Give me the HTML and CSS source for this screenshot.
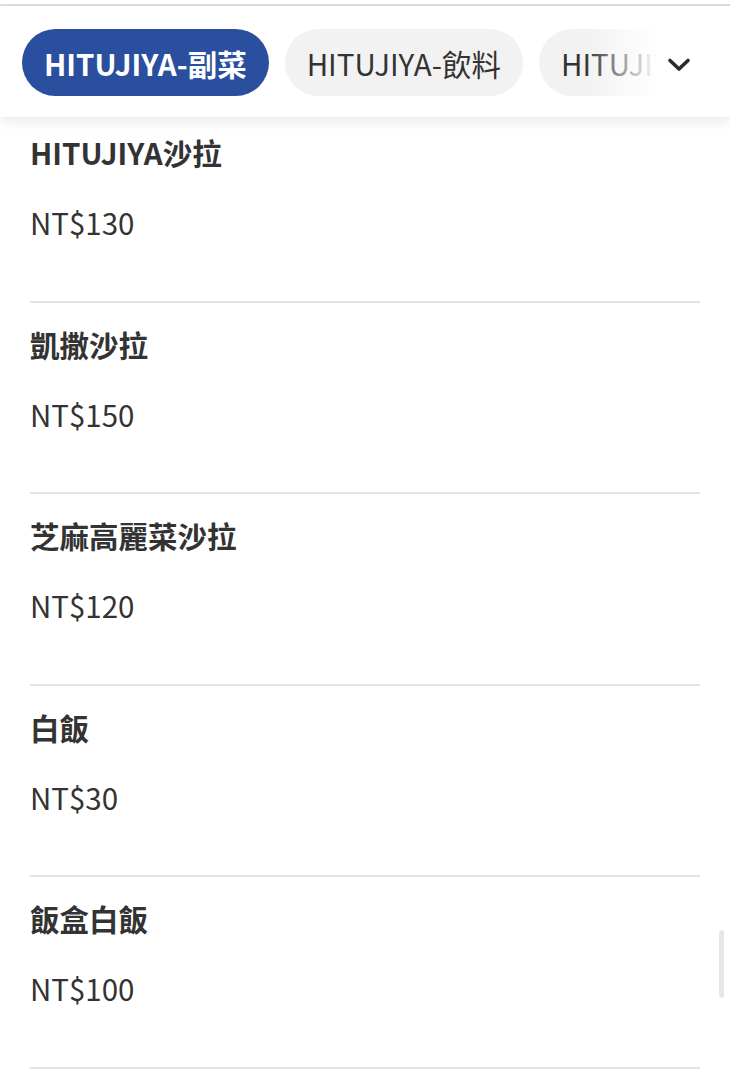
FILE: index.html
```html
<!DOCTYPE html>
<html lang="zh-Hant">
<head>
  <meta charset="UTF-8" />
  <meta name="viewport" content="width=device-width, initial-scale=1.0"/>
  <title>HITUJIYA 菜單</title>
  <link rel="stylesheet" href="styles.css">
</head>
<body>
<div class="top-line"></div>
<div class="tab-bar">
  <div class="tabs">
    <button class="tab active">HITUJIYA-副菜</button>
    <button class="tab">HITUJIYA-飲料</button>
    <button class="tab">HITUJIYA-甜點</button>
  </div>
  <div class="fade"></div>
  <button class="more">
    <svg width="24" height="16" viewBox="0 0 24 16">
      <path d="M3 3.5 L12 12 L21 3.5" fill="none" stroke="#2b2b2b" stroke-width="3.6" stroke-linecap="round" stroke-linejoin="round"/>
    </svg>
  </button>
</div>
<div class="menu">
  <div class="item">
    <div class="name">HITUJIYA沙拉</div>
    <div class="price">NT$130</div>
  </div>
  <div class="item">
    <div class="name">凱撒沙拉</div>
    <div class="price">NT$150</div>
  </div>
  <div class="item">
    <div class="name">芝麻高麗菜沙拉</div>
    <div class="price">NT$120</div>
  </div>
  <div class="item">
    <div class="name">白飯</div>
    <div class="price">NT$30</div>
  </div>
  <div class="item">
    <div class="name">飯盒白飯</div>
    <div class="price">NT$100</div>
  </div>
</div>
<div class="scrollbar"></div>
</body>
</html>
```

FILE: styles.css
```css
body {
  margin: 0;
  padding: 0;
  background-color: #fff;
  font-family: "Noto Sans CJK TC", "Noto Sans", sans-serif;
  color: #333;
  overflow: hidden;
  height: 1078px;
}
.top-line {
  height: 4px;
  border-bottom: 2px solid #dcdcdc;
  background-color: #fff;
}
.tab-bar {
  position: relative;
  z-index: 2;
  height: 111px;
  background-color: #fff;
  box-shadow: 0 6px 10px rgba(0, 0, 0, 0.07);
  margin-bottom: -6px;
  overflow: hidden;
}
.tabs {
  display: flex;
  gap: 16px;
  padding: 23px 0 0 22px;
  white-space: nowrap;
}
.tab {
  flex: none;
  height: 67px;
  padding: 0 22px;
  border: none;
  border-radius: 34px;
  background-color: #f2f2f2;
  color: #333;
  font-family: inherit;
  font-size: 29.5px;
  font-weight: 400;
}
.tab.active {
  background-color: #2a4f9e;
  color: #fff;
  font-weight: 700;
}
.fade {
  position: absolute;
  top: 20px;
  right: 0;
  width: 145px;
  height: 80px;
  background: linear-gradient(to right, rgba(255, 255, 255, 0), #fff 50%);
}
.more {
  position: absolute;
  top: 50px;
  left: 666px;
  width: 26px;
  height: 20px;
  padding: 0;
  border: none;
  background: none;
}
.menu {
  padding: 0 30px;
}
.item {
  box-sizing: border-box;
  height: 191.5px;
  padding-top: 21px;
  border-bottom: 2px solid #e2e2e2;
}
.name {
  font-size: 29.5px;
  font-weight: 700;
  line-height: 40px;
}
.price {
  margin-top: 30px;
  font-size: 29.5px;
  line-height: 40px;
}
.scrollbar {
  position: absolute;
  top: 930px;
  left: 719px;
  width: 5px;
  height: 68px;
  border-radius: 3px;
  background-color: #e6e6e6;
}
```
